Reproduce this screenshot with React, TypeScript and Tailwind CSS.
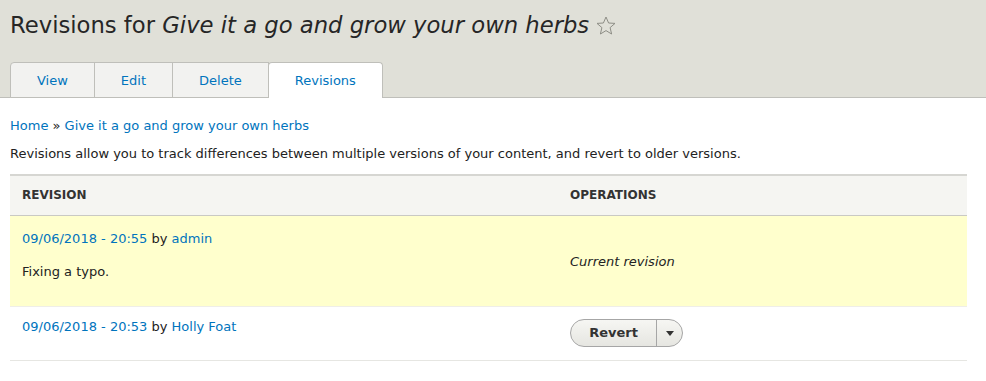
const tabs = [
  { label: "View", active: false },
  { label: "Edit", active: false },
  { label: "Delete", active: false },
  { label: "Revisions", active: true },
];

function StarOutline() {
  return (
    <svg width="20" height="19" viewBox="0 0 20 19" className="shrink-0">
      <polygon
        points="10,1 12.6,7 19,7.4 14.1,11.6 15.6,18 10,14.6 4.4,18 5.9,11.6 1,7.4 7.4,7"
        fill="none"
        stroke="#8e8e86"
        strokeWidth="1"
        strokeLinejoin="miter"
      />
    </svg>
  );
}

export default function App() {
  return (
    <div className="w-[986px] h-[381px] overflow-hidden bg-white font-['DejaVu_Sans',sans-serif] text-[13px] leading-[20px] text-[#222]">
      {/* Header region */}
      <div className="h-[98px] bg-[#e0e0d8] border-b border-[#bfbfba] px-[10px] flex flex-col justify-between">
        <h1 className="pt-[10px] flex items-center gap-[7px] text-[22.7px] leading-[30px] font-normal text-[#262626]">
          <span>
            Revisions for <em className="italic">Give it a go and grow your own herbs</em>
          </span>
          <StarOutline />
        </h1>
        <ul className="flex -mb-px">
          {tabs.map((tab) => (
            <li
              key={tab.label}
              className={
                tab.active
                  ? "bg-white border border-b-0 border-[#bfbfba] rounded-t-[4px] px-[26px] pt-[8px] pb-[7px] -ml-px"
                  : "bg-[#f2f2f0] border border-[#bfbfba] first:rounded-tl-[4px] px-[26px] pt-[8px] pb-[6px] -ml-px first:ml-0"
              }
            >
              <a className="text-[#0074bd]">{tab.label}</a>
            </li>
          ))}
        </ul>
      </div>

      {/* Content */}
      <div className="px-[10px]">
        <div className="mt-[18px]">
          <a className="text-[#0074bd]">Home</a> » <a className="text-[#0074bd]">Give it a go and grow your own herbs</a>
        </div>
        <p className="mt-[8px]">
          Revisions allow you to track differences between multiple versions of your content, and revert to older versions.
        </p>

        <table className="mt-[10px] w-[957px] border-collapse">
          <thead>
            <tr className="bg-[#f5f5f2] border-t-2 border-[#d6d6d2] border-b border-b-[#c9c9c4]">
              <th className="w-[548px] h-[40px] px-[12px] text-left text-[12px] font-bold uppercase text-[#333]">
                Revision
              </th>
              <th className="px-[12px] text-left text-[12px] font-bold uppercase text-[#333]">Operations</th>
            </tr>
          </thead>
          <tbody>
            <tr className="bg-[#ffffcd] border-b border-[#efeee8]">
              <td className="align-top px-[12px] pt-[13px] pb-[11px]">
                <a className="text-[#0074bd]">09/06/2018 - 20:55</a> by <a className="text-[#0074bd]">admin</a>
                <p className="my-[13px]">Fixing a typo.</p>
              </td>
              <td className="align-middle px-[12px] pt-[2px] italic">Current revision</td>
            </tr>
            <tr className="border-b border-[#e6e6e2]">
              <td className="align-top px-[12px] pt-[10px] pb-[12px]">
                <a className="text-[#0074bd]">09/06/2018 - 20:53</a> by <a className="text-[#0074bd]">Holly Foat</a>
              </td>
              <td className="align-middle px-[12px] h-[54px]">
                <div className="inline-flex h-[28px] rounded-full border border-[#a6a6a6] bg-gradient-to-b from-[#f6f6f3] to-[#e6e6e1] overflow-hidden">
                  <button className="w-[85px] font-bold text-[#333] text-[13px]">Revert</button>
                  <span className="w-[26px] border-l border-[#a6a6a6] flex items-center justify-center">
                    <svg width="8" height="5" viewBox="0 0 8 5">
                      <path d="M0 0 L8 0 L4 5 Z" fill="#333" />
                    </svg>
                  </span>
                </div>
              </td>
            </tr>
          </tbody>
        </table>
      </div>
    </div>
  );
}
